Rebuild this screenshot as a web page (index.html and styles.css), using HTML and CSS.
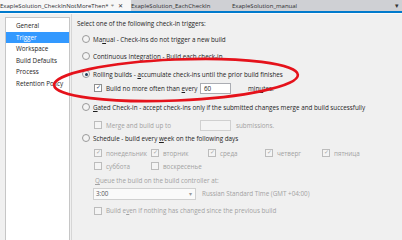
FILE: index.html
```html
<!DOCTYPE html>
<html lang="en">
<head>
  <meta charset="UTF-8" />
  <title>Build Definition - Trigger</title>
  <link rel="stylesheet" href="styles.css">
</head>
<body>
  <div id="tabs">
    <div class="tab active"><span class="tab-name">ExapleSolution_CheckInNotMoreThen*</span><span class="tab-pin">&#x2AE7;</span><span class="tab-close">&#x2715;</span></div>
    <div class="tab second">ExapleSolution_EachCheckIn</div>
    <div class="tab">ExapleSolution_manual</div>
    <div class="tab-menu">&#x25BE;</div>
  </div>
  <div id="page">
    <div id="nav">
      <div class="nav-item">General</div>
      <div class="nav-item selected">Trigger</div>
      <div class="nav-item">Workspace</div>
      <div class="nav-item">Build Defaults</div>
      <div class="nav-item">Process</div>
      <div class="nav-item">Retention Policy</div>
    </div>
    <div id="main">
      <div class="intro">Select one of the following check-in triggers:</div>

      <div class="row opt r-manual"><span class="radio"></span><span>Ma<u>n</u>ual - Check-ins do not trigger a new build</span></div>
      <div class="row opt r-ci"><span class="radio"></span><span>Continuous Integration - <u>B</u>uild each check-in</span></div>
      <div class="row opt r-rolling"><span class="radio on"></span><span>Rolling builds - <u>a</u>ccumulate check-ins until the prior build finishes</span></div>
      <div class="row sub r-every">
        <span class="check on">&#x2713;</span><span class="lbl-wide">Build no more often than <u>e</u>very</span>
        <span class="field">60</span><span class="after">min<u>u</u>tes.</span>
      </div>
      <div class="row opt r-gated"><span class="radio"></span><span><u>G</u>ated Check-in - accept check-ins only if the submitted changes merge and build successfully</span></div>
      <div class="row sub off r-merge">
        <span class="check dis"></span><span class="lbl-wide">Merge and build up to</span>
        <span class="field dis"></span><span class="after-s">submissions.</span>
      </div>
      <div class="row opt r-sched"><span class="radio"></span><span>Schedule - build every <u>w</u>eek on the following days</span></div>
      <div class="days">
        <div class="day"><span class="check dis">&#x2713;</span>понедельник</div>
        <div class="day"><span class="check dis">&#x2713;</span>вторник</div>
        <div class="day"><span class="check dis">&#x2713;</span>среда</div>
        <div class="day"><span class="check dis">&#x2713;</span>четверг</div>
        <div class="day"><span class="check dis">&#x2713;</span>пятница</div>
        <div class="day"><span class="check dis"></span>суббота</div>
        <div class="day"><span class="check dis"></span>воскресенье</div>
      </div>
      <div class="row off r-queue"><span><u>Q</u>ueue the build on the build controller at:</span></div>
      <div class="row off r-time">
        <span class="select">3:00<span class="select-arrow">&#x25BE;</span></span>
        <span>Russian Standard Time (GMT +04:00)</span>
      </div>
      <div class="row sub off r-even"><span class="check dis"></span><span>Build e<u>v</u>en if nothing has changed since the previous build</span></div>
    </div>
  </div>

  <svg id="mark" width="402" height="240" viewBox="0 0 402 240">
    <ellipse cx="176" cy="80" rx="122" ry="20.5" transform="rotate(-2.4 176 80)" fill="none" stroke="#e5121b" stroke-width="2.6"/>
  </svg>
</body>
</html>
```

FILE: styles.css
```css
:root {
  --bg: #f0f0f0;
  --text: #1e1e1e;
  --muted: #a2a2a2;
  --accent: #3399ff;
  --vs-blue: #007acc;
}
body {
  margin: 0;
  width: 402px;
  height: 240px;
  overflow: hidden;
  background: var(--bg);
  font-family: "Open Sans", sans-serif;
  font-size: 6.3px;
  color: var(--text);
  position: relative;
}
u {
  text-decoration-thickness: 0.5px;
  text-underline-offset: 1px;
}

/* document tabs */
#tabs {
  display: flex;
  align-items: center;
  height: 11px;
  background: #cfd0d4;
  border-bottom: 2px solid var(--vs-blue);
  color: #2d2d30;
  font-size: 6px;
}
.tab {
  display: flex;
  align-items: center;
  height: 11px;
  white-space: nowrap;
  width: 101px;
}
.tab.active {
  background: #f7f7f7;
  width: 131px;
}
.tab-name {
  width: 110px;
  overflow: hidden;
}
.tab-pin {
  margin-left: 1px;
  font-size: 5px;
  color: #555;
}
.tab-close {
  margin-left: 4px;
  font-size: 5.5px;
  color: #333;
}
.tab-menu {
  margin-left: auto;
  margin-right: 3px;
  font-size: 7px;
  color: #333;
}

/* page */
#page {
  display: flex;
  height: 227px;
  border-top: 1px solid #fbfbfb;
}
#nav {
  width: 63px;
  margin: 3px 0 0 5px;
  padding-top: 2px;
  background: #fff;
  border: 1px solid #c6c6c6;
  border-bottom: none;
}
.nav-item {
  height: 11.6px;
  line-height: 11.6px;
  padding-left: 10px;
  white-space: nowrap;
  overflow: hidden;
}
.nav-item.selected {
  background: var(--accent);
  color: #fff;
}
#main {
  flex: 1;
  margin-left: 1px;
  padding: 4px 0 0 5px;
  border-left: 1px solid #d6d6d6;
  white-space: nowrap;
}
.intro {
  height: 12px;
  line-height: 12px;
}
.row {
  display: flex;
  align-items: center;
  height: 12px;
}
.opt {
  padding-left: 5px;
}
.sub {
  padding-left: 17px;
}
.off {
  color: var(--muted);
}
.r-manual { margin-top: 3px; }
.r-ci { margin-top: 5px; }
.r-rolling { margin-top: 6px; }
.r-every { margin-top: 2px; }
.r-gated { margin-top: 7px; }
.r-merge { margin-top: 6px; }
.r-sched { margin-top: 1px; }
.r-queue { margin-top: 2px; padding-left: 18px; }
.r-time { margin-top: 0.5px; padding-left: 16px; gap: 6px; height: 13px; }
.r-even { margin-top: 4.5px; }

.radio {
  width: 6px;
  height: 6px;
  margin-right: 3px;
  border: 0.8px solid #9a9a9a;
  border-radius: 50%;
  background: #f4f4f4;
  display: inline-flex;
  align-items: center;
  justify-content: center;
  flex: none;
}
.radio.on::after {
  content: "";
  width: 3px;
  height: 3px;
  border-radius: 50%;
  background: #20405e;
}
.check {
  width: 6px;
  height: 6px;
  margin-right: 4px;
  border: 0.8px solid #8e8f8f;
  background: #fff;
  display: inline-flex;
  align-items: center;
  justify-content: center;
  font-size: 5.5px;
  line-height: 1;
  color: #253f6a;
  flex: none;
}
.check.dis {
  border-color: #bcbcbc;
  background: #f4f4f4;
  color: #a8a8a8;
}
.lbl-wide {
  width: 94px;
}
.field {
  width: 31px;
  height: 11px;
  box-sizing: border-box;
  border: 1px solid #abadb3;
  background: #fff;
  padding-left: 3px;
  line-height: 9px;
  color: var(--text);
}
.field.dis {
  border-color: #d0d0d0;
  background: #f4f4f4;
}
.after {
  margin-left: 17px;
}
.after-s {
  margin-left: 5px;
}
.days {
  display: grid;
  grid-template-columns: repeat(5, 57px);
  grid-auto-rows: 13px;
  padding-left: 17px;
  margin-top: 2.5px;
  color: var(--muted);
}
.day {
  display: flex;
  align-items: center;
}
.select {
  position: relative;
  width: 103px;
  height: 12px;
  box-sizing: border-box;
  border: 1px solid #d0d0d0;
  background: #fafafa;
  padding-left: 2px;
  line-height: 10px;
  color: #555;
}
.select-arrow {
  position: absolute;
  right: 3px;
  top: 0;
  color: #9a9a9a;
}

#mark {
  position: absolute;
  left: 0;
  top: 0;
  pointer-events: none;
}
```
